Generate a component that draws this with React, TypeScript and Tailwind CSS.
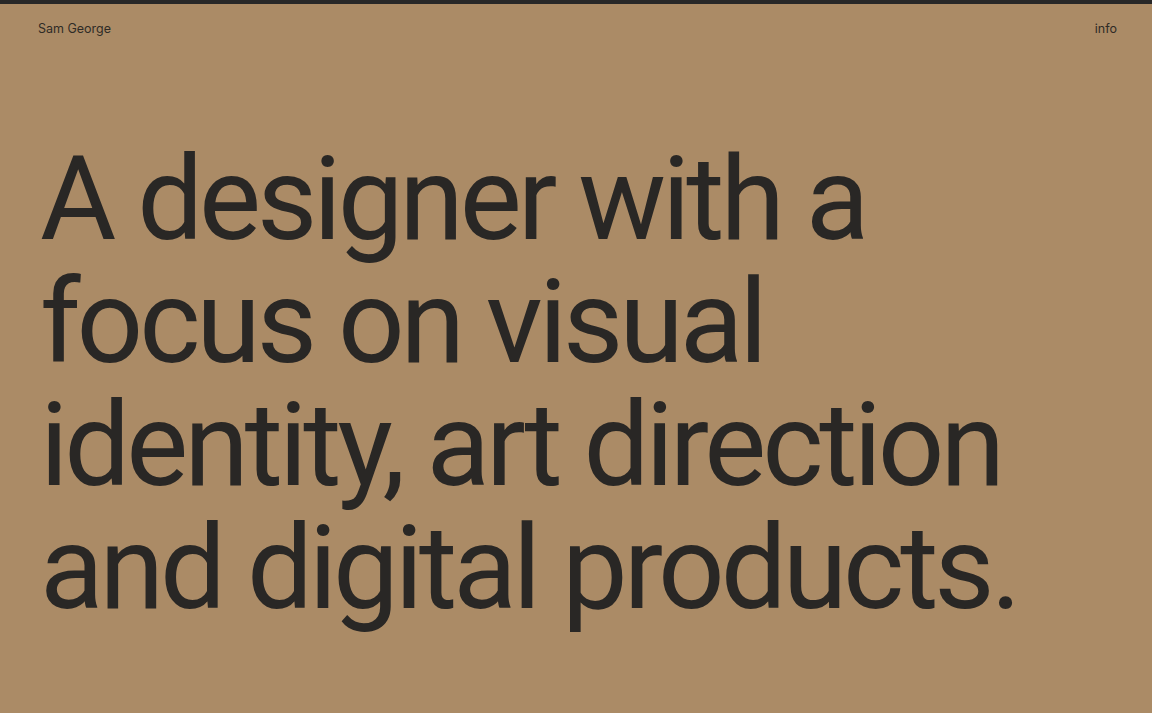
export default function App() {
  return (
    <main className="min-h-screen bg-[#ab8b66] border-t-4 border-[#282828] text-[#292725] font-['Inter','Liberation_Sans',sans-serif]">
      <header className="flex justify-between items-center pt-[17px] pl-[38px] pr-[35px] text-[12.5px] leading-4 text-[#2f2b26]">
        <a>Sam George</a>
        <a>info</a>
      </header>

      <h1 className="mt-[101px] pl-[40px] font-['Roboto','Inter',sans-serif] text-[117px] leading-[123px] font-normal tracking-[-0.035em]">
        A designer with a<br />
        focus on visual<br />
        identity, art direction<br />
        and digital products.
      </h1>
    </main>
  );
}
